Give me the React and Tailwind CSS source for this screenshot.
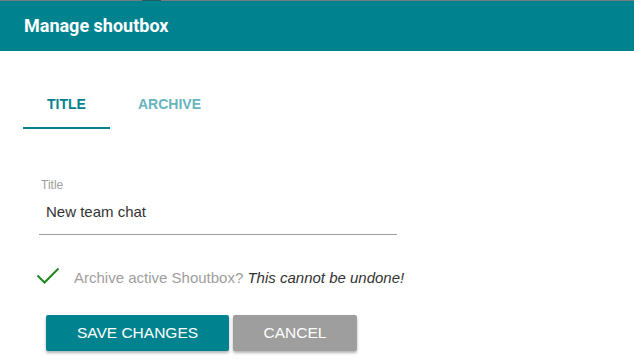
export default function App() {
  return (
    <div className="w-[634px] h-[363px] bg-white overflow-hidden" style={{ fontFamily: '"Liberation Sans", Arial, sans-serif' }}>
      <div className="h-px bg-[#7a7a7a] flex">
        <div className="ml-[142px] w-[19px] bg-[#1d5c61]" />
      </div>
      <div className="h-[50px] bg-[#00838f] px-6 flex items-center">
        <span className="text-white font-bold text-[18px] leading-none" style={{ fontFamily: 'Roboto, "Liberation Sans", sans-serif' }}>
          Manage shoutbox
        </span>
      </div>

      <div className="mt-[30px] ml-[23px] flex">
        <div className="w-[87px] h-12 flex items-center justify-center border-b-2 border-[#00838f] pt-[1px]">
          <span className="text-[14px] font-bold text-[#00838f] uppercase">Title</span>
        </div>
        <div className="w-[119px] h-12 flex items-center justify-center border-b-2 border-transparent pt-[1px]">
          <span className="text-[14px] font-bold text-[#66b5bc] uppercase">Archive</span>
        </div>
      </div>

      <div className="mt-[49px] ml-[39px] w-[358px] border-b border-[#9e9e9e] pb-[12px]">
        <div className="text-[12px] leading-[14px] text-[#9e9e9e] pl-[2px]">Title</div>
        <div className="mt-[10px] text-[15px] leading-[20px] text-[#333] pl-[7px]">New team chat</div>
      </div>

      <div className="mt-[32px] ml-[36px] flex items-start">
        <svg width="24" height="18" viewBox="0 0 24 18" className="shrink-0">
          <polyline points="1.5,8.5 8.5,15.5 22.5,1.5" fill="none" stroke="#1e8a1e" strokeWidth="2" />
        </svg>
        <div className="ml-[14px] mt-[1px] text-[15px] leading-[20px] whitespace-nowrap">
          <span className="text-[#9e9e9e]">Archive active Shoutbox? </span>
          <span className="italic text-[#333]">This cannot be undone!</span>
        </div>
      </div>

      <div className="mt-[27px] ml-[46px] flex gap-[4px]">
        <button className="w-[183px] h-9 bg-[#00838f] text-white text-[15.5px] uppercase rounded-[2px] shadow-[0_2px_3px_rgba(0,0,0,0.3)]">
          Save changes
        </button>
        <button className="w-[124px] h-9 bg-[#9e9e9e] text-white text-[15.5px] uppercase rounded-[2px] shadow-[0_2px_3px_rgba(0,0,0,0.3)]">
          Cancel
        </button>
      </div>
    </div>
  );
}
